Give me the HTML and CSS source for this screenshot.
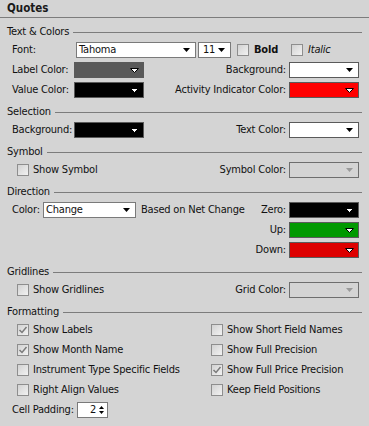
FILE: index.html
```html
<!DOCTYPE html>
<html lang="en">
  <head>
    <meta charset="UTF-8" />
    <meta name="viewport" content="width=device-width, initial-scale=1.0" />
    <title>Quotes</title>
    <link rel="stylesheet" href="styles.css">
  </head>
  <body>
    <div class="panel">
      <div class="title">Quotes</div>

      <!-- Text & Colors -->
      <section class="group">
        <div class="group-head"><span>Text &amp; Colors</span></div>
        <div class="row">
          <span class="lbl">Font:</span>
          <div class="select font-select">
            <span>Tahoma</span>
            <svg width="7" height="4"><polygon points="0,0 7,0 3.5,4" fill="#000" /></svg>
          </div>
          <div class="select size-select">
            <span>11</span>
            <svg width="7" height="4"><polygon points="0,0 7,0 3.5,4" fill="#000" /></svg>
          </div>
          <div class="check bold-check"><span class="box"></span><b>Bold</b></div>
          <div class="check italic-check"><span class="box"></span><i>Italic</i></div>
        </div>
        <div class="row">
          <span class="lbl">Label Color:</span>
          <div class="swatch c-gray">
            <svg width="9" height="5"><polygon points="0.5,0.5 8.5,0.5 4.5,4.5" fill="#fff" stroke="#000" /></svg>
          </div>
          <span class="rlbl">Background:</span>
          <div class="swatch c-white">
            <svg width="7" height="4"><polygon points="0,0 7,0 3.5,4" fill="#000" /></svg>
          </div>
        </div>
        <div class="row">
          <span class="lbl">Value Color:</span>
          <div class="swatch c-black">
            <svg width="9" height="5"><polygon points="0.5,0.5 8.5,0.5 4.5,4.5" fill="#fff" stroke="#000" /></svg>
          </div>
          <span class="rlbl">Activity Indicator Color:</span>
          <div class="swatch c-red">
            <svg width="9" height="5"><polygon points="0.5,0.5 8.5,0.5 4.5,4.5" fill="#fff" stroke="#000" /></svg>
          </div>
        </div>
      </section>

      <!-- Selection -->
      <section class="group">
        <div class="group-head"><span>Selection</span></div>
        <div class="row">
          <span class="lbl">Background:</span>
          <div class="swatch c-black">
            <svg width="9" height="5"><polygon points="0.5,0.5 8.5,0.5 4.5,4.5" fill="#fff" stroke="#000" /></svg>
          </div>
          <span class="rlbl">Text Color:</span>
          <div class="swatch c-white">
            <svg width="7" height="4"><polygon points="0,0 7,0 3.5,4" fill="#000" /></svg>
          </div>
        </div>
      </section>

      <!-- Symbol -->
      <section class="group">
        <div class="group-head"><span>Symbol</span></div>
        <div class="row check-row">
          <div class="check"><span class="box"></span>Show Symbol</div>
          <span class="rlbl">Symbol Color:</span>
          <div class="swatch disabled">
            <svg width="7" height="4"><polygon points="0,0 7,0 3.5,4" fill="#9a9a9a" /></svg>
          </div>
        </div>
      </section>

      <!-- Direction -->
      <section class="group">
        <div class="group-head"><span>Direction</span></div>
        <div class="row">
          <span class="lbl short">Color:</span>
          <div class="select dir-select">
            <span>Change</span>
            <svg width="7" height="4"><polygon points="0,0 7,0 3.5,4" fill="#000" /></svg>
          </div>
          <span class="note">Based on Net Change</span>
          <span class="rlbl">Zero:</span>
          <div class="swatch c-black">
            <svg width="9" height="5"><polygon points="0.5,0.5 8.5,0.5 4.5,4.5" fill="#fff" stroke="#000" /></svg>
          </div>
        </div>
        <div class="row">
          <span class="rlbl">Up:</span>
          <div class="swatch c-green">
            <svg width="9" height="5"><polygon points="0.5,0.5 8.5,0.5 4.5,4.5" fill="#fff" stroke="#000" /></svg>
          </div>
        </div>
        <div class="row">
          <span class="rlbl">Down:</span>
          <div class="swatch c-down">
            <svg width="9" height="5"><polygon points="0.5,0.5 8.5,0.5 4.5,4.5" fill="#fff" stroke="#000" /></svg>
          </div>
        </div>
      </section>

      <!-- Gridlines -->
      <section class="group">
        <div class="group-head"><span>Gridlines</span></div>
        <div class="row check-row">
          <div class="check"><span class="box"></span>Show Gridlines</div>
          <span class="rlbl">Grid Color:</span>
          <div class="swatch disabled">
            <svg width="7" height="4"><polygon points="0,0 7,0 3.5,4" fill="#9a9a9a" /></svg>
          </div>
        </div>
      </section>

      <!-- Formatting -->
      <section class="group">
        <div class="group-head"><span>Formatting</span></div>
        <div class="check-grid">
          <div class="check"><span class="box"><svg width="10" height="10"><path d="M1.5 5 L4 7.5 L8.5 2" fill="none" stroke="#7a7a7a" stroke-width="1.5" /></svg></span>Show Labels</div>
          <div class="check"><span class="box"></span>Show Short Field Names</div>
          <div class="check"><span class="box"><svg width="10" height="10"><path d="M1.5 5 L4 7.5 L8.5 2" fill="none" stroke="#7a7a7a" stroke-width="1.5" /></svg></span>Show Month Name</div>
          <div class="check"><span class="box"></span>Show Full Precision</div>
          <div class="check"><span class="box"></span>Instrument Type Specific Fields</div>
          <div class="check"><span class="box"><svg width="10" height="10"><path d="M1.5 5 L4 7.5 L8.5 2" fill="none" stroke="#7a7a7a" stroke-width="1.5" /></svg></span>Show Full Price Precision</div>
          <div class="check"><span class="box"></span>Right Align Values</div>
          <div class="check"><span class="box"></span>Keep Field Positions</div>
        </div>
        <div class="row">
          <span class="lbl pad-lbl">Cell Padding:</span>
          <div class="spinner">
            <span>2</span>
            <svg width="5" height="10">
              <polygon points="0,4 5,4 2.5,1" fill="#000" />
              <polygon points="0,6 5,6 2.5,9" fill="#000" />
            </svg>
          </div>
        </div>
      </section>
    </div>
  </body>
</html>
```

FILE: styles.css
```css
* {
  box-sizing: border-box;
  margin: 0;
  padding: 0;
}

html,
body {
  background: #d4d4d4;
}

body {
  font-family: "DejaVu Sans Condensed", "DejaVu Sans", sans-serif;
  font-stretch: condensed;
  font-size: 11px;
  letter-spacing: -0.2px;
  color: #111;
  line-height: 16px;
}

.panel {
  width: 369px;
  height: 426px;
}

.title {
  height: 18px;
  padding: 1px 7px 0;
  font-size: 11.5px;
  font-weight: bold;
  letter-spacing: 0;
  line-height: 15px;
  color: #1a1a1a;
  border-bottom: 1px solid #7c7c7c;
}

.group {
  margin: 7px 7px 0 7px;
}

.group-head {
  display: flex;
  align-items: center;
  height: 14px;
  margin-bottom: 3px;
}

.group-head::after {
  content: "";
  flex: 1;
  border-top: 1px solid #7c7c7c;
  margin-left: 4px;
}

.row {
  display: flex;
  align-items: center;
  height: 16px;
  padding: 0 3px 0 5px;
  margin-bottom: 4px;
  white-space: nowrap;
}

.row > * {
  flex-shrink: 0;
}

.check-row {
  padding-left: 10px;
}

.lbl {
  width: 62px;
}

.lbl.short {
  width: 31px;
}

.lbl.pad-lbl {
  width: 65px;
}

.rlbl {
  margin-left: auto;
  margin-right: 3px;
}

.note {
  margin-left: 5px;
}

/* dropdowns */
.select {
  display: flex;
  align-items: center;
  justify-content: space-between;
  height: 16px;
  background: #fff;
  border: 1px solid #7a7a7a;
  padding: 0 5px 0 2px;
}

.font-select {
  width: 120px;
  margin-left: 2px;
}

.size-select {
  width: 33px;
  margin-left: 2px;
  padding-left: 4px;
}

.dir-select {
  width: 93px;
}

/* colour swatches */
.swatch {
  display: flex;
  align-items: center;
  justify-content: flex-end;
  width: 70px;
  height: 16px;
  border: 1px solid #5a5a5a;
  padding-right: 4px;
}

.swatch.c-white {
  background: #fff;
  padding-right: 5px;
}

.swatch.c-gray {
  background: #595959;
}

.swatch.c-black {
  background: #000;
}

.swatch.c-red {
  background: #ff0000;
}

.swatch.c-green {
  background: #009900;
}

.swatch.c-down {
  background: #dd0000;
}

.swatch.disabled {
  background: #d4d4d4;
  border-color: #6e6e6e;
  padding-right: 5px;
}

/* checkboxes */
.check {
  display: flex;
  align-items: center;
  height: 16px;
  white-space: nowrap;
}

.box {
  display: flex;
  align-items: center;
  justify-content: center;
  flex-shrink: 0;
  width: 12px;
  height: 12px;
  margin-right: 4px;
  border: 1px solid #8e8e8e;
  background: linear-gradient(135deg, #d2d2d2, #f2f2f2);
}

.bold-check {
  margin-left: 6px;
}

.bold-check .box {
  margin-right: 5px;
}

.italic-check {
  margin-left: 13px;
}

.italic-check .box {
  margin-right: 5px;
}

.check-grid {
  display: grid;
  grid-template-columns: 194px 1fr;
  row-gap: 4px;
  padding-left: 10px;
  margin-bottom: 4px;
}

/* spinner */
.spinner {
  display: flex;
  align-items: center;
  justify-content: flex-end;
  gap: 3px;
  width: 31px;
  height: 16px;
  background: #fff;
  border: 1px solid #7a7a7a;
  padding-right: 3px;
}
```
